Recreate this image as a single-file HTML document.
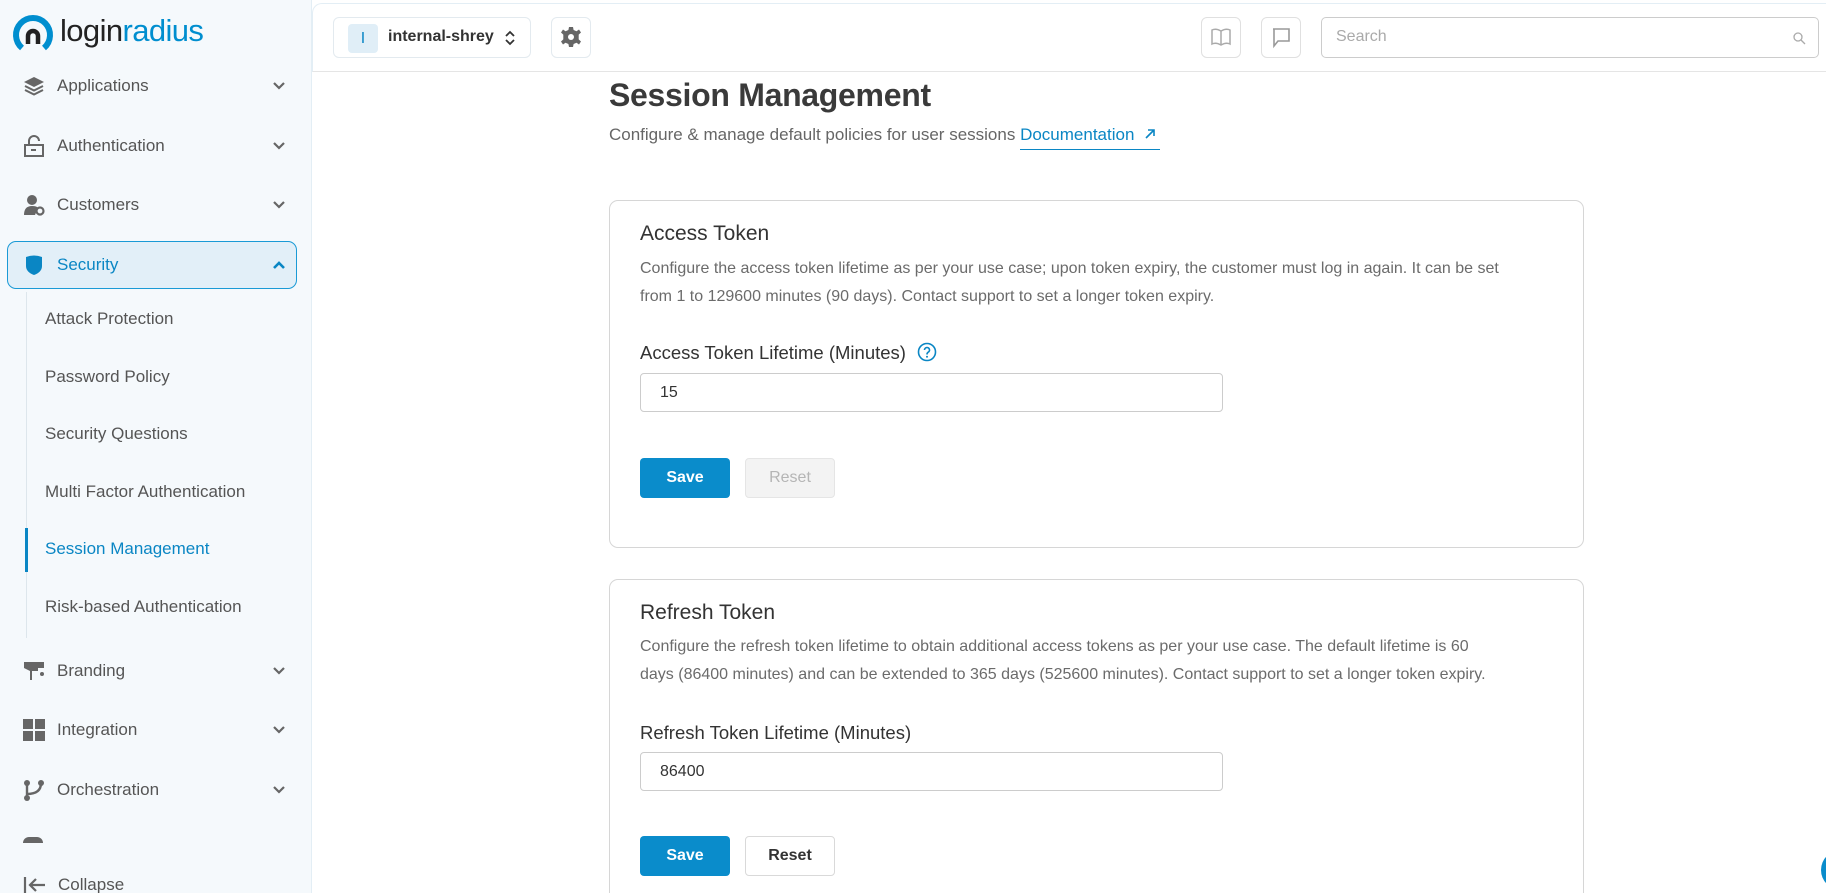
<!DOCTYPE html>
<html style="width:1826px;height:893px;overflow:hidden"><head><meta charset="utf-8"><style>
*{box-sizing:border-box;margin:0;padding:0}
body{width:1826px;height:893px;overflow:hidden;background:#fff;font-family:"Liberation Sans",sans-serif;position:relative;color:#333}
.a{position:absolute}
#side{left:0;top:0;width:312px;height:893px;background:#f5f9fc;border-right:1px solid #e3eef5}
.mi{position:absolute;left:0;width:312px;height:40px;display:flex;align-items:center;font-size:17px;color:#555}
.mi svg.ic{position:absolute;left:23px;width:22px;height:22px}
.mi span{position:absolute;left:57px}
.mi .ch{position:absolute;left:272px;width:14px;height:14px}
.sub{position:absolute;left:45px;font-size:17px;color:#555;transform:translateY(-50%)}
.btn{position:absolute;border-radius:4px;font-size:16px;font-weight:bold;display:flex;align-items:center;justify-content:center}
.card{position:absolute;left:609px;width:975px;border:1px solid #d6d6d6;border-radius:9px;background:#fff}
.h{position:absolute;left:640px;font-size:21px;color:#333;transform:translateY(-50%)}
.d{position:absolute;left:640px;font-size:16px;color:#6b6b6b;line-height:28px;width:862px}
.l{position:absolute;left:640px;font-size:18.5px;color:#333;transform:translateY(-50%)}
.in{position:absolute;left:640px;width:583px;height:39px;border:1px solid #ccc;border-radius:4px;font-size:16px;color:#333;padding-left:19px;display:flex;align-items:center}
</style></head><body>
<div class="a" id="side">
 <svg class="a" style="left:12px;top:14px" width="42" height="40" viewBox="0 0 42 40"><path d="M10 34 A17 17 0 1 1 32 34" fill="none" stroke="#008ecf" stroke-width="6"/><path d="M16 30 V22 a5 5 0 0 1 10 0 V30" fill="none" stroke="#222" stroke-width="4.5"/></svg>
 <div class="a" style="left:60px;top:13px;font-size:31px;letter-spacing:-0.6px"><span style="color:#222">login</span><span style="color:#008ecf">radius</span></div>

 <div class="mi" style="top:66px"><svg class="ic" viewBox="0 0 22 22"><path d="M11 2 L21 7 L11 12 L1 7Z" fill="#666"/><path d="M2 11 L11 15.5 L20 11 M2 15 L11 19.5 L20 15" fill="none" stroke="#666" stroke-width="2"/></svg><span>Applications</span><svg class="ch" viewBox="0 0 14 14"><path d="M2 4 L7 9 L12 4" fill="none" stroke="#666" stroke-width="2.2"/></svg></div>
 <div class="mi" style="top:126px"><svg class="ic" viewBox="0 0 22 22"><rect x="2" y="10" width="18" height="11" fill="none" stroke="#666" stroke-width="2"/><path d="M6 10 V6 a5 5 0 0 1 10 0" fill="none" stroke="#666" stroke-width="2"/><rect x="8" y="14" width="5" height="2" fill="#666"/></svg><span>Authentication</span><svg class="ch" viewBox="0 0 14 14"><path d="M2 4 L7 9 L12 4" fill="none" stroke="#666" stroke-width="2.2"/></svg></div>
 <div class="mi" style="top:185px"><svg class="ic" viewBox="0 0 22 22"><circle cx="9" cy="6" r="5" fill="#666"/><path d="M1 21 Q1 12 9 12 Q14 12 15 14 L12 21Z" fill="#666"/><circle cx="17" cy="17" r="3.5" fill="none" stroke="#666" stroke-width="2.2"/></svg><span>Customers</span><svg class="ch" viewBox="0 0 14 14"><path d="M2 4 L7 9 L12 4" fill="none" stroke="#666" stroke-width="2.2"/></svg></div>
 <div class="a" style="left:7px;top:241px;width:290px;height:48px;background:#e2eff8;border:1px solid #1a9ad6;border-radius:9px"></div>
 <div class="mi" style="top:245px;color:#0a86c4"><svg class="ic" viewBox="0 0 22 22"><path d="M3 3 Q11 0 19 3 V12 Q19 18 11 21 Q3 18 3 12Z" fill="#0a86c4"/></svg><span>Security</span><svg class="ch" viewBox="0 0 14 14"><path d="M2 10 L7 5 L12 10" fill="none" stroke="#0a86c4" stroke-width="2.6"/></svg></div>
 <div class="a" style="left:26px;top:292px;width:1px;height:346px;background:#dde6ec"></div>
 <div class="a" style="left:25px;top:528px;width:3px;height:44px;background:#0a86c4"></div>
 <div class="sub" style="top:319px">Attack Protection</div>
 <div class="sub" style="top:377px">Password Policy</div>
 <div class="sub" style="top:434px">Security Questions</div>
 <div class="sub" style="top:492px">Multi Factor Authentication</div>
 <div class="sub" style="top:549px;color:#0a86c4">Session Management</div>
 <div class="sub" style="top:607px">Risk-based Authentication</div>
 <div class="mi" style="top:651px"><svg class="ic" viewBox="0 0 22 22"><rect x="1" y="2" width="20" height="6" fill="#666"/><path d="M1 8 H15 V11 H9 V20 H7 V11" fill="#666"/><circle cx="19" cy="14" r="2" fill="#666"/></svg><span>Branding</span><svg class="ch" viewBox="0 0 14 14"><path d="M2 4 L7 9 L12 4" fill="none" stroke="#666" stroke-width="2.2"/></svg></div>
 <div class="mi" style="top:710px"><svg class="ic" viewBox="0 0 22 22"><rect x="0" y="0" width="10" height="10" fill="#666"/><rect x="12" y="0" width="10" height="10" fill="#666"/><rect x="0" y="12" width="10" height="10" fill="#666"/><rect x="12" y="12" width="10" height="10" fill="#666"/></svg><span>Integration</span><svg class="ch" viewBox="0 0 14 14"><path d="M2 4 L7 9 L12 4" fill="none" stroke="#666" stroke-width="2.2"/></svg></div>
 <div class="mi" style="top:770px"><svg class="ic" viewBox="0 0 22 22"><circle cx="4" cy="4" r="3" fill="#666"/><circle cx="4" cy="19" r="3" fill="#666"/><circle cx="18" cy="4" r="3" fill="#666"/><path d="M4 4 V19 M4 15 Q18 15 18 4" fill="none" stroke="#666" stroke-width="2.4"/></svg><span>Orchestration</span><svg class="ch" viewBox="0 0 14 14"><path d="M2 4 L7 9 L12 4" fill="none" stroke="#666" stroke-width="2.2"/></svg></div>
 <div class="a" style="left:23px;top:837px;width:20px;height:6px;background:#666;border-radius:8px 8px 0 0"></div>
 <svg class="a" style="left:23px;top:876px" width="24" height="17" viewBox="0 0 24 17"><path d="M2 1 V17 M22 9 H8 M13 3 L7 9 L13 15" fill="none" stroke="#666" stroke-width="2.2"/></svg>
 <div class="a" style="left:58px;top:875px;font-size:17px;color:#555">Collapse</div>
</div>

<div class="a" style="left:312px;top:3px;width:1514px;height:69px;border-top:1px solid #e3eef5;border-left:1px solid #e3eef5;border-bottom:1px solid #e5e5e5;border-radius:10px 0 0 0;background:#fff"></div>
<div class="a" style="left:333px;top:17px;width:198px;height:41px;border:1px solid #e3eaef;border-radius:6px;background:#fff"></div>
<div class="a" style="left:348px;top:24px;width:30px;height:29px;background:#e0eef7;border-radius:4px;color:#0a86c4;font-size:16px;text-align:center;line-height:29px">I</div>
<div class="a" style="left:388px;top:28px;font-size:16px;font-weight:bold;color:#333">internal-shrey</div>
<svg class="a" style="left:504px;top:29px" width="12" height="18" viewBox="0 0 12 18"><path d="M2 7 L6 3 L10 7 M2 11 L6 15 L10 11" fill="none" stroke="#333" stroke-width="1.8"/></svg>
<div class="a" style="left:551px;top:17px;width:40px;height:41px;border:1px solid #e3eaef;border-radius:6px"></div>
<svg class="a" style="left:560px;top:26px" width="22" height="22" viewBox="0 0 22 22"><path d="M9 1 H13 L13.6 4 L16.5 5.3 L19 3.5 L21 6.5 L18.7 8.6 L18.7 13.4 L21 15.5 L19 18.5 L16.5 16.7 L13.6 18 L13 21 H9 L8.4 18 L5.5 16.7 L3 18.5 L1 15.5 L3.3 13.4 L3.3 8.6 L1 6.5 L3 3.5 L5.5 5.3 L8.4 4Z" fill="#666"/><circle cx="11" cy="11" r="3" fill="#fff"/></svg>
<div class="a" style="left:1201px;top:17px;width:40px;height:41px;border:1px solid #e0e0e0;border-radius:6px"></div>
<svg class="a" style="left:1210px;top:27px" width="22" height="20" viewBox="0 0 22 20"><path d="M11 4 Q6 1 2 3 V17 Q6 15 11 18 Q16 15 20 17 V3 Q16 1 11 4 V18" fill="none" stroke="#aaa" stroke-width="1.5"/></svg>
<div class="a" style="left:1261px;top:17px;width:40px;height:41px;border:1px solid #e0e0e0;border-radius:6px"></div>
<svg class="a" style="left:1271px;top:27px" width="20" height="22" viewBox="0 0 20 22"><path d="M2 2 H18 V14 H7 L3 19 V2" fill="none" stroke="#999" stroke-width="1.6"/></svg>
<div class="a" style="left:1321px;top:17px;width:498px;height:41px;border:1px solid #ccc;border-radius:5px"></div>
<div class="a" style="left:1336px;top:28px;font-size:16px;color:#aaa">Search</div>
<svg class="a" style="left:1792px;top:31px" width="14" height="14" viewBox="0 0 14 14"><circle cx="6" cy="6" r="4" fill="none" stroke="#aaa" stroke-width="1.3"/><path d="M9 9 L13 13" stroke="#aaa" stroke-width="1.3"/></svg>

<div class="a" style="left:609px;top:77px;font-size:32px;font-weight:bold;color:#3a3a3a;letter-spacing:-0.3px">Session Management</div>
<div class="a" style="left:609px;top:125px;font-size:17px;color:#666">Configure &amp; manage default policies for user sessions <span style="color:#0a86c4;border-bottom:1px solid #0a86c4;padding-bottom:5px;padding-right:4px">Documentation &nbsp;<svg width="12" height="12" viewBox="0 0 12 12"><path d="M2 10 L10 2 M4 2 H10 V8" fill="none" stroke="#0a86c4" stroke-width="1.6"/></svg></span></div>

<div class="card" style="top:200px;height:348px"></div>
<div class="h" style="top:234px">Access Token</div>
<div class="d" style="top:255px">Configure the access token lifetime as per your use case; upon token expiry, the customer must log in again. It can be set from 1 to 129600 minutes (90 days). Contact support to set a longer token expiry.</div>
<div class="l" style="top:353px">Access Token Lifetime (Minutes) <svg style="vertical-align:-3px;margin-left:6px" width="20" height="20" viewBox="0 0 20 20"><circle cx="10" cy="10" r="8.5" fill="none" stroke="#0a86c4" stroke-width="1.6"/><path d="M7.5 8 a2.5 2.5 0 1 1 3.5 2.3 Q10 11 10 12.5" fill="none" stroke="#0a86c4" stroke-width="1.6"/><circle cx="10" cy="14.8" r="1" fill="#0a86c4"/></svg></div>
<div class="in" style="top:373px">15</div>
<div class="btn" style="left:640px;top:458px;width:90px;height:40px;background:#0a8ccb;color:#fff">Save</div>
<div class="btn" style="left:745px;top:458px;width:90px;height:40px;background:#f3f3f3;border:1px solid #e5e5e5;color:#b5b5b5;font-weight:normal">Reset</div>

<div class="card" style="top:579px;height:330px"></div>
<div class="h" style="top:613px">Refresh Token</div>
<div class="d" style="top:633px">Configure the refresh token lifetime to obtain additional access tokens as per your use case. The default lifetime is 60 days (86400 minutes) and can be extended to 365 days (525600 minutes). Contact support to set a longer token expiry.</div>
<div class="l" style="top:733px">Refresh Token Lifetime (Minutes)</div>
<div class="in" style="top:752px">86400</div>
<div class="btn" style="left:640px;top:836px;width:90px;height:40px;background:#0a8ccb;color:#fff">Save</div>
<div class="btn" style="left:745px;top:836px;width:90px;height:40px;background:#fff;border:1px solid #d9d9d9;color:#333">Reset</div>
<div class="a" style="left:1821px;top:850px;width:40px;height:40px;border-radius:50%;background:#0a8ccb"></div>
</body></html>
